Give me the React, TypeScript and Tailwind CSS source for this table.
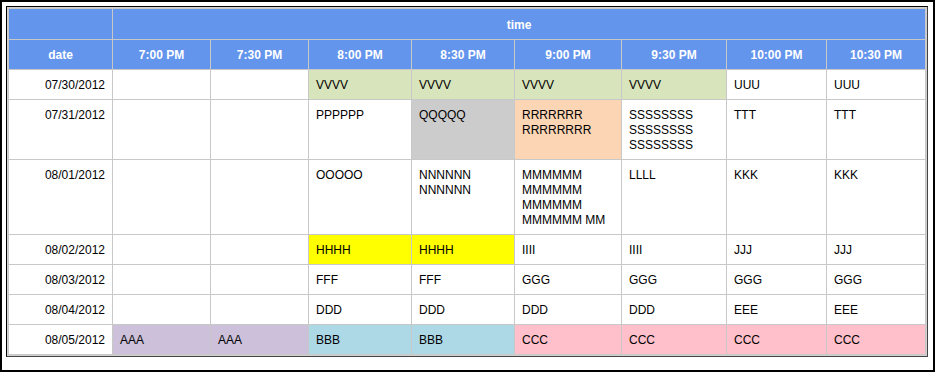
import React from "react";

type Cell = { t?: string; bg?: string };

const G = "bg-[#d8e4bc]";
const rows: { date: string; cells: Cell[] }[] = [
  {
    date: "07/30/2012",
    cells: [{}, {}, { t: "VVVV", bg: G }, { t: "VVVV", bg: G }, { t: "VVVV", bg: G }, { t: "VVVV", bg: G }, { t: "UUU" }, { t: "UUU" }],
  },
  {
    date: "07/31/2012",
    cells: [
      {},
      {},
      { t: "PPPPPP" },
      { t: "QQQQQ", bg: "bg-[#cccccc]" },
      { t: "RRRRRRR RRRRRRRR", bg: "bg-[#fcd5b4]" },
      { t: "SSSSSSSS SSSSSSSS SSSSSSSS" },
      { t: "TTT" },
      { t: "TTT" },
    ],
  },
  {
    date: "08/01/2012",
    cells: [
      {},
      {},
      { t: "OOOOO" },
      { t: "NNNNNN NNNNNN" },
      { t: "MMMMMM MMMMMM MMMMMM MMMMMM MM" },
      { t: "LLLL" },
      { t: "KKK" },
      { t: "KKK" },
    ],
  },
  {
    date: "08/02/2012",
    cells: [{}, {}, { t: "HHHH", bg: "bg-[#ffff00]" }, { t: "HHHH", bg: "bg-[#ffff00]" }, { t: "IIII" }, { t: "IIII" }, { t: "JJJ" }, { t: "JJJ" }],
  },
  {
    date: "08/03/2012",
    cells: [{}, {}, { t: "FFF" }, { t: "FFF" }, { t: "GGG" }, { t: "GGG" }, { t: "GGG" }, { t: "GGG" }],
  },
  {
    date: "08/04/2012",
    cells: [{}, {}, { t: "DDD" }, { t: "DDD" }, { t: "DDD" }, { t: "DDD" }, { t: "EEE" }, { t: "EEE" }],
  },
  {
    date: "08/05/2012",
    cells: [
      { t: "AAA", bg: "bg-[#ccc0da]" },
      { t: "AAA", bg: "bg-[#ccc0da]" },
      { t: "BBB", bg: "bg-[#add8e6]" },
      { t: "BBB", bg: "bg-[#add8e6]" },
      { t: "CCC", bg: "bg-[#ffc0cb]" },
      { t: "CCC", bg: "bg-[#ffc0cb]" },
      { t: "CCC", bg: "bg-[#ffc0cb]" },
      { t: "CCC", bg: "bg-[#ffc0cb]" },
    ],
  },
];

const times = ["7:00 PM", "7:30 PM", "8:00 PM", "8:30 PM", "9:00 PM", "9:30 PM", "10:00 PM", "10:30 PM"];
const widths = [104, 98, 98, 103, 103, 107, 105, 100, 99];

export default function App() {
  return (
    <div
      className="w-[935px] h-[372px] border-2 border-black bg-white pt-[4px] pl-[4px]"
      style={{ fontFamily: '"Liberation Sans", Arial, sans-serif' }}
    >
      <div className="inline-block border border-black border-r-[#444] border-b-[#444] bg-[#d0d0d0] p-px">
        <table className="border-collapse table-fixed text-[12px] leading-[15px] text-black bg-white">
          <colgroup>
            {widths.map((w, i) => (
              <col key={i} style={{ width: w }} />
            ))}
          </colgroup>
          <thead>
            <tr>
              <th className="bg-[#6495ed] border border-[#c8c8c8] pt-[9px] pb-[6px]"></th>
              <th
                colSpan={8}
                className="bg-[#6495ed] border border-[#c8c8c8] pt-[9px] pb-[6px] text-center font-bold text-white"
              >
                time
              </th>
            </tr>
            <tr>
              <th className="bg-[#6495ed] border border-[#c8c8c8] pt-[8px] pb-[6px] text-center font-bold text-white">date</th>
              {times.map((t) => (
                <th key={t} className="bg-[#6495ed] border border-[#c8c8c8] pt-[8px] pb-[6px] text-center font-bold text-white">
                  {t}
                </th>
              ))}
            </tr>
          </thead>
          <tbody>
            {rows.map((r) => (
              <tr key={r.date}>
                <td className="border border-[#c8c8c8] pt-[8px] pb-[6px] pr-[7px] text-right align-top">{r.date}</td>
                {r.cells.map((c, i) => (
                  <td key={i} className={`border border-[#c8c8c8] pt-[8px] pb-[6px] px-[7px] align-top ${c.bg ?? ""}`}>
                    {c.t ?? ""}
                  </td>
                ))}
              </tr>
            ))}
          </tbody>
        </table>
      </div>
    </div>
  );
}
